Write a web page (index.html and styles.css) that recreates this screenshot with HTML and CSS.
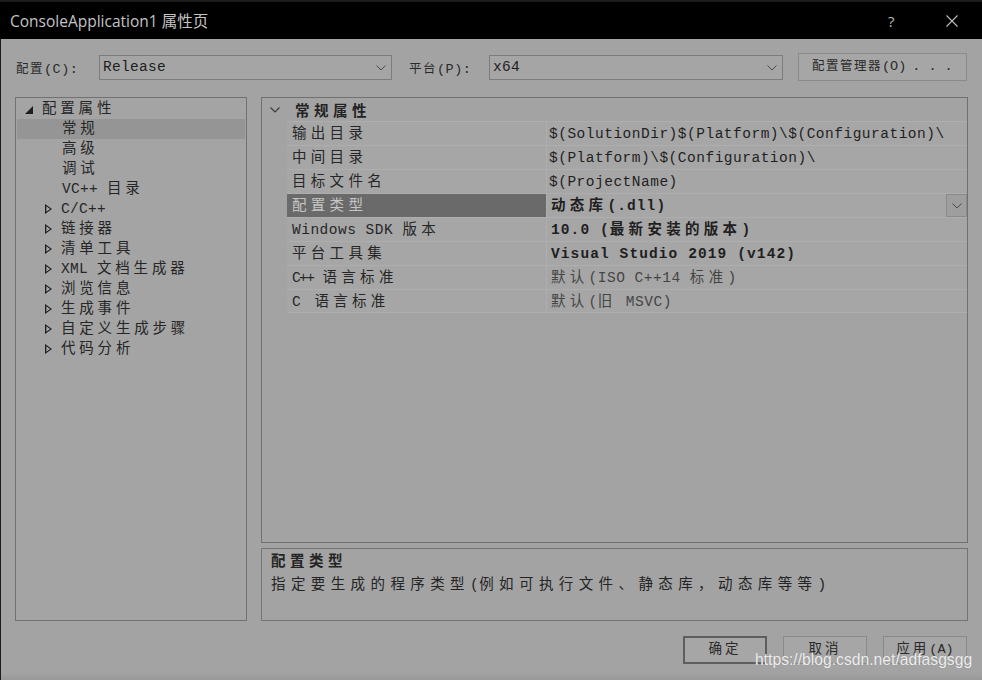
FILE: index.html
```html
<!DOCTYPE html>
<html lang="zh-CN">
<head>
<meta charset="utf-8">
<title>ConsoleApplication1 属性页</title>
<link rel="stylesheet" href="styles.css">
</head>
<body>
<div class="win">
  <div class="titlebar">
    <span class="title">ConsoleApplication1 属性页</span>
    <span class="help">?</span>
    <span class="close"><svg width="12" height="12" viewBox="0 0 12 12"><path d="M0.5 0.5L11.5 11.5M11.5 0.5L0.5 11.5" stroke="#bdbdbd" stroke-width="1.1" fill="none"/></svg></span>
  </div>

  <div class="toolbar">
    <span class="lbl"><span class="zs">配置</span>(C):</span>
    <div class="combo c1"><span class="ctext">Release</span><svg class="chev" width="10" height="6" viewBox="0 0 10 6"><path d="M0.5 0.5L5 5L9.5 0.5" fill="none" stroke="#4a4a4a" stroke-width="1"/></svg></div>
    <span class="lbl l2"><span class="zs">平台</span>(P):</span>
    <div class="combo c2"><span class="ctext">x64</span><svg class="chev" width="10" height="6" viewBox="0 0 10 6"><path d="M0.5 0.5L5 5L9.5 0.5" fill="none" stroke="#4a4a4a" stroke-width="1"/></svg></div>
    <button class="btn mgr"><span class="zs">配置管理器</span>(O)<span class="dots">...</span></button>
  </div>

  <div class="content">
    <div class="tree">
      <div class="trow top"><span class="tri-open"></span><span class="z">配置属性</span></div>
      <div class="trow child sel"><span class="z">常规</span></div>
      <div class="trow child"><span class="z">高级</span></div>
      <div class="trow child"><span class="z">调试</span></div>
      <div class="trow child">VC++ <span class="z">目录</span></div>
      <div class="trow col"><span class="tri"></span>C/C++</div>
      <div class="trow col"><span class="tri"></span><span class="z">链接器</span></div>
      <div class="trow col"><span class="tri"></span><span class="z">清单工具</span></div>
      <div class="trow col"><span class="tri"></span>XML <span class="z">文档生成器</span></div>
      <div class="trow col"><span class="tri"></span><span class="z">浏览信息</span></div>
      <div class="trow col"><span class="tri"></span><span class="z">生成事件</span></div>
      <div class="trow col"><span class="tri"></span><span class="z">自定义生成步骤</span></div>
      <div class="trow col"><span class="tri"></span><span class="z">代码分析</span></div>
    </div>

    <div class="rightcol">
      <div class="grid">
        <div class="ghead"><svg class="gchev" width="10" height="6" viewBox="0 0 10 6"><path d="M0.5 0.5L5 5L9.5 0.5" fill="none" stroke="#3a3a3a" stroke-width="1.1"/></svg><span class="z b">常规属性</span></div>
        <div class="prow"><div class="pname"><span class="z">输出目录</span></div><div class="pval">$(SolutionDir)$(Platform)\$(Configuration)\</div></div>
        <div class="prow"><div class="pname"><span class="z">中间目录</span></div><div class="pval">$(Platform)\$(Configuration)\</div></div>
        <div class="prow"><div class="pname"><span class="z">目标文件名</span></div><div class="pval">$(ProjectName)</div></div>
        <div class="prow"><div class="pname psel"><span class="z">配置类型</span></div><div class="pval b"><span class="z">动态库</span>(.dll)<span class="dd"><svg width="10" height="6" viewBox="0 0 10 6"><path d="M0.5 0.5L5 5L9.5 0.5" fill="none" stroke="#4a4a4a" stroke-width="1"/></svg></span></div></div>
        <div class="prow"><div class="pname">Windows SDK <span class="z">版本</span></div><div class="pval b">10.0 (<span class="z">最新安装的版本</span>)</div></div>
        <div class="prow"><div class="pname"><span class="z">平台工具集</span></div><div class="pval b">Visual Studio 2019 (v142)</div></div>
        <div class="prow"><div class="pname"><span class="narrow">C++</span> <span class="z">语言标准</span></div><div class="pval g"><span class="z">默认</span>(ISO C++14 <span class="z">标准</span>)</div></div>
        <div class="prow"><div class="pname">C <span class="z cgap">语言标准</span></div><div class="pval g"><span class="z">默认</span>(<span class="z">旧</span> MSVC)</div></div>
      </div>
      <div class="desc">
        <div class="dline"><span class="z b dz">配置类型</span></div>
        <div class="dline"><span class="z dz">指定要生成的程序类型</span>(<span class="z dz">例如可执行文件、静态库，动态库等等</span>)</div>
      </div>
    </div>
  </div>

  <div class="buttons">
    <button class="btn bb ok"><span class="zs">确定</span></button>
    <button class="btn bb"><span class="zs">取消</span></button>
    <button class="btn bb"><span class="zs">应用</span>(A)</button>
  </div>

  <div class="watermark">https://blog.csdn.net/adfasgsgg</div>
</div>
</body>
</html>
```
FILE: styles.css
```css
* { box-sizing: border-box; margin: 0; padding: 0; }

body {
  margin: 0;
  width: 982px;
  height: 680px;
  overflow: hidden;
  background: #a3a3a3;
  font-family: "Liberation Mono", "Noto Sans CJK SC", monospace;
  color: #232323;
}

.win {
  position: relative;
  width: 982px;
  height: 680px;
  background: #a3a3a3;
  box-shadow: inset 1px 0 #1c1c1c, inset 0 -10px 10px -10px #8e8e8e;
}

/* title bar */
.titlebar {
  height: 39px;
  background: #000;
  border-top: 2px solid #1d1d1d;
  display: flex;
  align-items: center;
  padding-left: 10px;
  color: #c4c4c4;
  font-family: "Open Sans", "Noto Sans CJK SC", sans-serif;
  font-size: 15.5px;
}
.title { flex: 1; }
.help {
  width: 12px;
  margin-right: 46px;
  color: #b8b8b8;
  font-size: 15px;
}
.close {
  width: 12px;
  margin-right: 24px;
  display: flex;
}

/* toolbar */
.toolbar {
  display: flex;
  align-items: center;
  height: 28px;
  margin-top: 14px;
  padding-left: 16px;
  font-size: 13px;
}
.lbl {
  width: 83px;
  color: #2a2a2a;
  font-size: 13.5px;
  letter-spacing: 0.5px;
  white-space: pre;
}
.l2 { margin-left: 17px; width: 80px; }
.zs { font-size: 12.5px; letter-spacing: 1.5px; }
.combo {
  height: 25px;
  border: 1px solid #7c7c7c;
  background: #a5a5a5;
  display: flex;
  align-items: center;
  justify-content: space-between;
  padding: 0 5px 0 3px;
  font-size: 14.5px;
  letter-spacing: 0.3px;
  color: #1e1e1e;
}
.c1 { width: 293px; }
.c2 { width: 294px; }
.chev { margin-top: 1px; }

.btn {
  font-family: "Liberation Mono", "Noto Sans CJK SC", monospace;
  font-size: 13.5px;
  color: #2a2a2a;
  background: #a6a6a6;
  border: 1px solid #8a8a8a;
  height: 28px;
  white-space: pre;
}
.mgr {
  margin-left: 15px;
  width: 169px;
  text-align: left;
  padding-left: 13px;
  line-height: 26px;
}
.dots { letter-spacing: 8px; margin-left: 6px; }

/* content */
.content {
  display: flex;
  gap: 14px;
  margin-top: 16px;
  padding-left: 15px;
  height: 524px;
}

.tree {
  width: 232px;
  height: 524px;
  border: 1px solid #717171;
  background: #a4a4a4;
  padding: 1px 1px 0;
  font-size: 14.5px;
  letter-spacing: 0.3px;
}
.trow {
  height: 20px;
  line-height: 21px;
  white-space: pre;
  color: #262626;
}
.z { font-size: 14.5px; letter-spacing: 4.3px; }
.trow .z { letter-spacing: 3.8px; }
.top { padding-left: 8px; }
.tri-open {
  display: inline-block;
  vertical-align: -1px;
  width: 0; height: 0;
  border-left: 8px solid transparent;
  border-bottom: 8px solid #1e1e1e;
  margin-right: 9px;
}
.child { padding-left: 45px; }
.sel { background: #959595; }
.col { padding-left: 28px; }
.tri {
  display: inline-block;
  vertical-align: -1px;
  width: 7px;
  height: 10px;
  margin-right: 9px;
  background: #1e1e1e;
  clip-path: polygon(0 0, 100% 50%, 0 100%, 0 0, 1.3px 2.2px, 1.3px 7.8px, 5.2px 5px, 1.3px 2.2px);
}

.rightcol {
  width: 707px;
  display: flex;
  flex-direction: column;
  gap: 5px;
}
.grid {
  height: 446px;
  border: 1px solid #707070;
  background: #a3a3a3;
}
.ghead {
  height: 23px;
  display: flex;
  align-items: center;
  padding-left: 8px;
}
.gchev { margin-right: 15px; }
.b { font-weight: bold; }
.z.b { letter-spacing: 4.5px; }

.prow {
  display: flex;
  height: 24px;
  margin-left: 25px;
  border-top: 1px solid #aeaeae;
  background: #a6a6a6;
  white-space: pre;
  font-size: 14.5px;
  letter-spacing: 0.5px;
}
.prow:last-child { border-bottom: 1px solid #aeaeae; }
.pname {
  width: 260px;
  border-right: 1px solid #aeaeae;
  line-height: 24px;
  padding-left: 5px;
  color: #262626;
}
.psel {
  background: #6a6a6a;
  color: #c6c6c6;
}
.narrow { letter-spacing: -1.6px; }
.cgap { margin-left: 4px; }
.pval {
  flex: 1;
  line-height: 24px;
  padding-left: 2px;
  color: #1f1f1f;
  position: relative;
}
.pval.b { letter-spacing: 1.1px; padding-left: 4px; }
.pval.g { color: #454545; padding-left: 4px; }
.dd {
  position: absolute;
  right: 0;
  top: 0;
  width: 21px;
  height: 23px;
  border: 1px solid #8a8a8a;
  background: #9e9e9e;
  display: flex;
  align-items: center;
  justify-content: center;
}

.desc {
  height: 73px;
  border: 1px solid #747474;
  padding: 2px 9px 0;
  font-size: 14.5px;
  letter-spacing: 0.5px;
  color: #242424;
}
.dline {
  height: 23px;
  line-height: 23px;
  white-space: pre;
}
.dz { letter-spacing: 5.4px; }

/* bottom buttons */
.buttons {
  display: flex;
  justify-content: flex-end;
  gap: 16px;
  margin-top: 15px;
  padding-right: 15px;
}
.bb {
  width: 84px;
  height: 28px;
  line-height: 24px;
  text-align: center;
}
.bb .zs { font-size: 13.5px; letter-spacing: 3px; }
.ok { border: 2px solid #5e5e5e; }

.watermark {
  position: absolute;
  left: 755px;
  top: 651px;
  font-family: "Liberation Sans", Arial, sans-serif;
  font-size: 15.7px;
  color: #ededed;
  text-shadow: 0 0 1px #8a8a8a;
}
```
